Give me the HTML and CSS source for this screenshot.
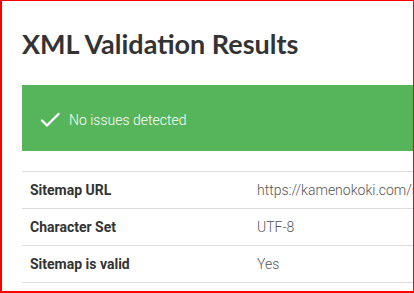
FILE: index.html
```html
<!DOCTYPE html>
<html lang="en">
<head>
<meta charset="utf-8">
<title>XML Validation Results</title>
<link rel="stylesheet" href="styles.css">
</head>
<body>
<div class="frame">
  <div class="content">
    <h1 class="title">XML Validation Results</h1>
    <div class="alert">
      <svg class="check" width="20" height="16" viewBox="0 0 20 16" aria-hidden="true">
        <polyline points="2,8.5 7,13.5 18.5,2" fill="none" stroke="#fff" stroke-width="2.4" stroke-linecap="round" stroke-linejoin="round"/>
      </svg>
      <span class="alert-text">No issues detected</span>
    </div>
    <table class="results">
      <tbody>
        <tr><th>Sitemap URL</th><td>https://kamenokoki.com/sitemap.xml</td></tr>
        <tr><th>Character Set</th><td>UTF-8</td></tr>
        <tr><th>Sitemap is valid</th><td>Yes</td></tr>
      </tbody>
    </table>
  </div>
</div>
</body>
</html>
```
FILE: styles.css
```css
html, body {
  margin: 0;
  padding: 0;
  background: #fff;
}
.frame {
  box-sizing: border-box;
  width: 414px;
  height: 293px;
  border-style: solid;
  border-color: #ff0000;
  border-width: 1px 1px 2px 2px;
  overflow: hidden;
}
.content {
  width: 700px;
  padding-left: 20px;
  padding-top: 27px;
}
.title {
  margin: 0;
  font-family: Lato, "Open Sans", sans-serif;
  font-weight: 700;
  font-size: 27px;
  line-height: 32px;
  color: #333;
}
.alert {
  margin-top: 25px;
  height: 66px;
  box-sizing: border-box;
  padding-top: 3px;
  background: #56b45b;
  display: flex;
  align-items: center;
  padding-left: 18px;
  color: #fff;
}
.check {
  display: block;
}
.alert-text {
  margin-left: 9px;
  font-family: Roboto, "Liberation Sans", sans-serif;
  font-size: 14px;
  font-weight: 300;
  line-height: 20px;
}
.results {
  margin-top: 20px;
  width: 100%;
  border-collapse: collapse;
  font-family: Roboto, "Liberation Sans", sans-serif;
  font-size: 14px;
  line-height: 20px;
}
.results th,
.results td {
  border-top: 1px solid #ddd;
  border-bottom: 1px solid #ddd;
  padding: 8px 8px;
  text-align: left;
  vertical-align: middle;
}
.results th {
  width: 211px;
  font-weight: 700;
  color: #333;
}
.results td {
  color: #555;
  font-weight: 300;
  white-space: nowrap;
}
```
